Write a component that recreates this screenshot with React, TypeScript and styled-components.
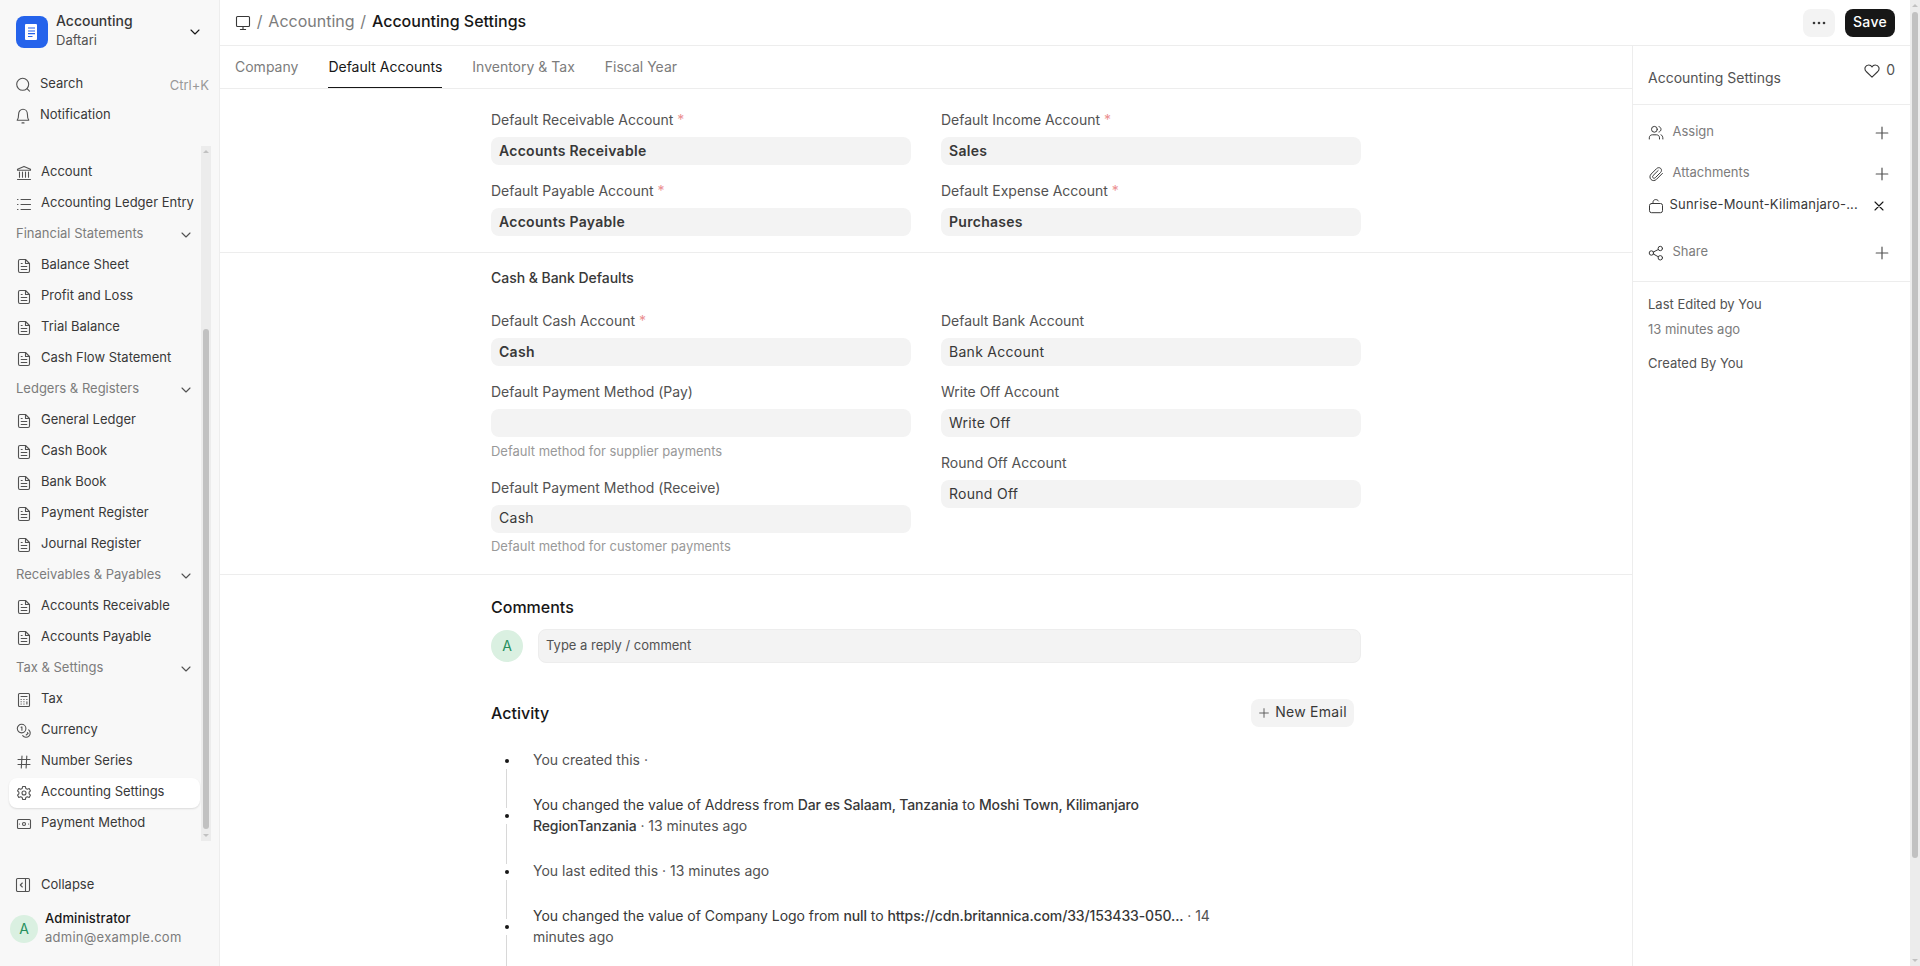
import React from 'react';
import styled, { createGlobalStyle, css } from 'styled-components';

const GlobalStyle = createGlobalStyle`
  * { box-sizing: border-box; }
  html, body { margin: 0; padding: 0; height: 966px; overflow: hidden; }
  body {
    font-family: Inter, "Liberation Sans", sans-serif;
    font-size: 14px;
    font-weight: 420;
    color: #383838;
    background: #fff;
  }
`;

const Shell = styled.div`
  display: flex;
  width: 1920px;
  height: 966px;
  overflow: hidden;
`;

/* ---------- icons ---------- */
const Svg = styled.svg<{ $size?: number; $color?: string }>`
  display: block;
  flex: none;
  width: ${(p) => p.$size ?? 16}px;
  height: ${(p) => p.$size ?? 16}px;
  fill: none;
  stroke: ${(p) => p.$color ?? '#525252'};
  stroke-linecap: round;
  stroke-linejoin: round;
`;

type IconName =
  | 'search' | 'bell' | 'bank' | 'list' | 'file' | 'calc' | 'coins' | 'hash' | 'gear' | 'cash'
  | 'collapse' | 'down' | 'desktop' | 'users' | 'clip' | 'unlock' | 'share' | 'plus' | 'x' | 'heart';

const shapes: Record<IconName, React.ReactNode> = {
  search: <><circle cx="6.7" cy="7.3" r="6" /><path d="M11 11.6L13.5 14.1" /></>,
  bell: <><path d="M1.2 12.2C2.4 10.9 2.6 9.8 2.6 6.3C2.6 3.4 4.6 1.3 7 1.3C9.4 1.3 11.4 3.4 11.4 6.3C11.4 9.8 11.6 10.9 12.8 12.2Z" /><path d="M6 14.9H8" /></>,
  bank: <><path d="M1.5 5.2V4.2L8 1.4L14.5 4.2V5.2Z" /><path d="M3.5 7V12.2M6.5 7V12.2M9.5 7V12.2M12.5 7V12.2M1.5 14.5H14.5" /></>,
  list: <path d="M5 3.5H14.5M5 8.5H14.5M5 13.5H14.5M1.5 3.5H2M1.5 8.5H2M1.5 13.5H2" />,
  file: <><path d="M4 1.5H9.5L13.5 5.5V13A1.5 1.5 0 0 1 12 14.5H4A1.5 1.5 0 0 1 2.5 13V3A1.5 1.5 0 0 1 4 1.5Z" /><path d="M9.5 1.5V5.5H13.5M5.2 5.5H6.2M5.2 8.5H10.8M5.2 11.5H10.8" /></>,
  calc: <><rect x="2.5" y="1.5" width="11" height="13" rx="1" /><path d="M5 4.5H11" /><path d="M5 7.5H5.3M7.8 7.5H8.1M10.7 7.5H11M5 9.8H5.3M7.8 9.8H8.1M10.9 9.8V12M5 12H5.3M7.8 12H8.1" /></>,
  coins: <><circle cx="5.6" cy="5.6" r="4.3" /><path d="M5 4.2L5.9 3.9V7.2M12.7 6.8A4.2 4.2 0 1 1 6.7 12.6M11.4 9.6L12.1 10.3L10.2 12" /></>,
  hash: <path d="M2 5.5H14M2 10.5H14M6 2L5.3 14M10.8 2L10.1 14" />,
  gear: <><circle cx="8" cy="8" r="2" /><path d="M6.7 1.5H9.3L9.8 3.4L11.3 4.2L13.2 3.6L14.5 5.9L13.1 7.2V8.8L14.5 10.1L13.2 12.4L11.3 11.8L9.8 12.6L9.3 14.5H6.7L6.2 12.6L4.7 11.8L2.8 12.4L1.5 10.1L2.9 8.8V7.2L1.5 5.9L2.8 3.6L4.7 4.2L6.2 3.4Z" /></>,
  cash: <><rect x="1.5" y="3.5" width="13" height="9" rx="1" /><circle cx="8" cy="8" r="1.5" /><path d="M3.4 8H3.5M12.5 8H12.6" /></>,
  collapse: <><rect x="1.5" y="1.5" width="13" height="13" rx="1.2" /><path d="M10.5 1.5V14.5M7.3 6L5.3 8L7.3 10" /></>,
  down: <path d="M4 6L8 10L12 6" />,
  desktop: <><rect x="1.5" y="1.5" width="13" height="10" rx="1" /><path d="M8 11.5V14.5M5.4 14.5H10.6" /></>,
  users: <><circle cx="6.4" cy="4.3" r="2.9" /><path d="M1.3 14V12.8C1.3 10.8 2.8 9.8 4.4 9.8H8.4C10 9.8 11.5 10.8 11.5 12.8V14M11 1.6C13.8 2.3 13.8 6.3 11 7M13 9.8C14.3 10.4 14.9 11.4 14.9 14" /></>,
  clip: <path d="M14.2 7.2L8.3 13.1C6.7 14.7 4.3 14.8 2.8 13.3C1.3 11.8 1.4 9.4 3 7.8L8.4 2.4C9.6 1.2 11.4 1.2 12.5 2.2C13.6 3.3 13.5 5.1 12.4 6.2L7.1 11.5C6.4 12.2 5.4 12.2 4.8 11.6C4.2 11 4.2 10 4.9 9.3L10 4.3" transform="translate(.2 .2)" />,
  unlock: <><rect x="1.5" y="5.5" width="13" height="9.2" rx="2" /><path d="M5 5.5V4.2C5 1.2 9.2.6 10.5 3" /></>,
  share: <><circle cx="3.4" cy="8" r="2.2" /><circle cx="12.3" cy="3.5" r="2.2" /><circle cx="12.3" cy="12.8" r="2.2" /><path d="M5.4 7L10.3 4.5M5.4 9L10.3 11.8" /></>,
  plus: <path d="M8 2.2V13.8M2.2 8H13.8" />,
  x: <path d="M4 4L12 12M12 4L4 12" />,
  heart: <path d="M8 14.2L2.2 8.5C-.3 5.8 1.3 2 4.7 2C6.4 2 7.5 3 8 4C8.5 3 9.6 2 11.3 2C14.7 2 16.3 5.8 13.8 8.5Z" />,
};

const Icon = ({ name, size, color, weight = 1.1 }: { name: IconName; size?: number; color?: string; weight?: number }) => (
  <Svg viewBox="0 0 16 16" $size={size} $color={color} strokeWidth={weight}>{shapes[name]}</Svg>
);

/* ---------- left sidebar ---------- */
const Sidebar = styled.aside`
  flex: none;
  display: flex;
  flex-direction: column;
  width: 220px;
  background: #f8f8f8;
  border-right: 1px solid #ededed;
`;

const Workspace = styled.div`
  display: flex;
  align-items: center;
  height: 64px;
  padding: 0 16px;
  gap: 8px;
`;

const Logo = styled.svg`
  display: block;
  width: 32px;
  height: 32px;
`;

const Names = styled.div<{ $spread?: boolean }>`
  flex: 1;
  padding-bottom: ${(p) => (p.$spread ? 3 : 2)}px;
  > :first-child { margin-bottom: ${(p) => (p.$spread ? 1 : 0)}px; }
`;

const Primary = styled.div`
  font-size: 14px;
  line-height: 19px;
  font-weight: 500;
`;

const UserName = styled(Primary)`
  font-size: 13px;
  letter-spacing: 0.01em;
  color: #171717;
`;

const Secondary = styled.div`
  font-size: 13px;
  line-height: 19px;
  color: #525252;
`;

const Email = styled(Secondary)`
  letter-spacing: 0.02em;
  color: #7c7c7c;
`;

const QuickLinks = styled.div`
  display: flex;
  flex-direction: column;
  height: 82px;
  padding: 6px 10px 0 16px;
`;

const QuickLink = styled.div`
  display: flex;
  align-items: center;
  height: 30px;
  margin-bottom: 1px;
  gap: 8px;
  font-size: 13px;
`;

const Label = styled.span<{ $low?: boolean }>`
  flex: 1;
  padding-bottom: ${(p) => (p.$low ? 2 : 4)}px;
  white-space: nowrap;
`;

const Shortcut = styled.span`
  color: #999;
`;

const NavArea = styled.div`
  display: flex;
  height: 695px;
`;

const NavList = styled.nav`
  width: 201px;
  padding: 12px 1px 0 9px;
`;

const NavItem = styled.div<{ $active?: boolean; $group?: boolean }>`
  display: flex;
  align-items: center;
  height: 30px;
  margin-bottom: 1px;
  padding: 0 6px 0 7px;
  gap: 9px;
  border-radius: 8px;
  font-size: 13px;
  ${(p) => p.$group && css`color: #7c7c7c;`}
  ${(p) => p.$active && css`background: #fff; box-shadow: 0 1px 2px rgba(0, 0, 0, 0.12);`}
`;

const Track = styled.div<{ $top: number }>`
  display: flex;
  flex-direction: column;
  align-items: center;
  width: 10px;
  height: 100%;
  background: #ececec;
  padding: 4px 0;

  &::before {
    content: '';
    border: 3px solid transparent;
    border-top: 0;
    border-bottom: 3px solid #c1c1c1;
    margin-bottom: ${(p) => p.$top}px;
  }
  &::after {
    content: '';
    border: 3px solid transparent;
    border-bottom: 0;
    border-top: 3px solid #c1c1c1;
    margin-top: auto;
  }
`;

const Thumb = styled.div<{ $height: number }>`
  flex: none;
  width: 6px;
  height: ${(p) => p.$height}px;
  border-radius: 3px;
  background: #c1c1c1;
`;

const NavTrack = styled.div`
  height: 695px;
`;

const SidebarFooter = styled.div`
  padding: 28px 10px 0 10px;
`;

const CollapseRow = styled.div`
  display: flex;
  align-items: center;
  height: 32px;
  padding-left: 5px;
  gap: 10px;
  font-size: 13px;
`;

const UserRow = styled.div`
  display: flex;
  align-items: center;
  gap: 7px;
  height: 54px;
  margin-top: 1px;
`;

const Avatar = styled.div<{ $size: number }>`
  display: flex;
  flex: none;
  align-items: center;
  justify-content: center;
  width: ${(p) => p.$size}px;
  height: ${(p) => p.$size}px;
  border-radius: 50%;
  background: #daf0e1;
  color: #278f5e;
  font-size: 14px;
  line-height: 1;
  padding-bottom: 1px;
`;

/* ---------- page ---------- */
const Page = styled.div`
  display: flex;
  flex-direction: column;
  width: 1690px;
`;

const Header = styled.header`
  display: flex;
  align-items: center;
  justify-content: space-between;
  height: 46px;
  padding: 1px 15px 0;
  border-bottom: 1px solid #ededed;
`;

const Crumbs = styled.div`
  display: flex;
  align-items: center;
  gap: 5.8px;
  font-size: 16px;
  line-height: 20px;
`;

const Crumb = styled.span<{ $current?: boolean }>`
  padding-bottom: 5px;
  font-weight: ${(p) => (p.$current ? 500 : 420)};
  color: ${(p) => (p.$current ? '#171717' : '#7c7c7c')};
`;

const Actions = styled.div`
  display: flex;
  gap: 10px;
`;

const Button = styled.button<{ $dark?: boolean; $width: number }>`
  display: flex;
  align-items: center;
  justify-content: center;
  gap: 5px;
  width: ${(p) => p.$width}px;
  height: 28px;
  padding: 0;
  border: 0;
  border-radius: 8px;
  background: ${(p) => (p.$dark ? '#171717' : '#f3f3f3')};
  color: ${(p) => (p.$dark ? '#fff' : '#383838')};
  font: inherit;
  font-weight: ${(p) => (p.$dark ? 500 : 420)};
  letter-spacing: 0.02em;
`;

const ButtonText = styled.span`
  padding-bottom: 3px;
`;

const Dots = styled.svg`
  width: 14px;
  height: 4px;
  fill: #383838;
`;

const Body = styled.div`
  display: flex;
  height: 920px;
`;

const Main = styled.main`
  width: 1412px;
  overflow: hidden;
`;

const Tabs = styled.div`
  display: flex;
  height: 43px;
  padding-left: 15px;
  gap: 30px;
  border-bottom: 1px solid #ededed;
`;

const Tab = styled.div<{ $active?: boolean }>`
  height: 42px;
  line-height: 42px;
  font-size: 14px;
  color: ${(p) => (p.$active ? '#171717' : '#7c7c7c')};
  border-bottom: ${(p) => (p.$active ? '1px solid #171717' : '0')};
`;

const Section = styled.section<{ $height: number; $top: number }>`
  height: ${(p) => p.$height}px;
  padding: ${(p) => p.$top}px 271px 0;
  border-bottom: 1px solid #ededed;
`;

const SectionTitle = styled.h3`
  margin: 0 0 23px;
  font-size: 14px;
  line-height: 20px;
  font-weight: 500;
  letter-spacing: -0.04px;
`;

const Columns = styled.div`
  display: grid;
  grid-template-columns: 420px 420px;
  column-gap: 30px;
`;

const Column = styled.div`
  display: flex;
  flex-direction: column;
`;

const FieldBox = styled.div<{ $hint?: boolean }>`
  height: ${(p) => (p.$hint ? 96 : 71)}px;
`;

const FieldLabel = styled.div`
  height: 27px;
  line-height: 20px;
  font-size: 14px;
  letter-spacing: -0.02px;
  color: #525252;
`;

const Star = styled.span`
  color: #eb9091;
`;

const Value = styled.div<{ $bold?: boolean; $raised?: boolean }>`
  height: 28px;
  padding: 0 8px;
  border-radius: 8px;
  background: #f3f3f3;
  line-height: ${(p) => (p.$raised ? 26 : 28)}px;
  font-size: 14px;
  letter-spacing: 0.02em;
  font-weight: ${(p) => (p.$bold ? 600 : 420)};
`;

const Hint = styled.div<{ $raised?: boolean }>`
  padding-top: ${(p) => (p.$raised ? 3 : 4)}px;
  font-size: 13px;
  line-height: 20px;
  letter-spacing: -0.02px;
  color: #999;
`;

type FieldProps = { label: string; value?: string; required?: boolean; hint?: string };

const Field = ({ label, value, required, hint }: FieldProps) => (
  <FieldBox $hint={!!hint}>
    <FieldLabel>{label}{required && <Star> *</Star>}</FieldLabel>
    <Value $bold={required} $raised={!!hint}>{value}</Value>
    {hint && <Hint $raised={!!value}>{hint}</Hint>}
  </FieldBox>
);

const Footer = styled.section`
  padding: 21px 271px 0;
`;

const FooterTitle = styled.h2`
  margin: 0;
  font-size: 16px;
  line-height: 22px;
  font-weight: 500;
  color: #171717;
`;

const CommentRow = styled.div`
  display: flex;
  align-items: center;
  gap: 15px;
  height: 34px;
  margin-top: 11px;
`;

const CommentBox = styled.div`
  flex: 1;
  height: 34px;
  padding: 0 7px;
  border: 1px solid #ededed;
  border-radius: 8px;
  background: #f3f3f3;
  font-size: 13px;
  line-height: 31px;
  color: #525252;
`;

const ActivityHead = styled.div`
  display: flex;
  align-items: center;
  justify-content: space-between;
  height: 28px;
  margin: 36px 7px 0 0;
`;

const Timeline = styled.div`
  display: flex;
  height: 217px;
  margin-top: 22px;
  overflow: hidden;
`;

const Event = styled.div<{ $tall?: boolean }>`
  height: ${(p) => (p.$tall ? 66 : 45)}px;
`;

const EventText = styled.div<{ $strong?: boolean }>`
  line-height: 21px;
  font-size: 14px;
  white-space: nowrap;
  letter-spacing: ${(p) => (p.$strong ? '-0.035px' : '0')};
  color: ${(p) => (p.$strong ? '#383838' : '#525252')};
  b { font-weight: 500; letter-spacing: -0.13px; color: #383838; }
`;

const Muted = styled.span`
  color: #525252;
`;

const Rail = styled.div`
  display: flex;
  flex-direction: column;
  flex: none;
  width: 42px;
  padding: 10px 0 0 14px;
`;

const Dot = styled.i`
  flex: none;
  width: 4px;
  height: 4px;
  border-radius: 50%;
  background: #171717;
`;

const Line = styled.i<{ $height: number }>`
  flex: none;
  width: 1px;
  height: ${(p) => p.$height}px;
  margin: 6px 0 6px 1px;
  background: #d8d8d8;
`;

/* ---------- right panel ---------- */
const Panel = styled.aside`
  width: 278px;
  border-left: 1px solid #ededed;
`;

const PanelHead = styled.div`
  display: flex;
  justify-content: space-between;
  height: 59px;
  padding: 15px 15px 0;
  border-bottom: 1px solid #ededed;
`;

const PanelTitle = styled.div`
  padding-top: 7px;
  line-height: 20px;
  font-size: 14px;
  color: #525252;
`;

const Likes = styled.div`
  display: flex;
  align-items: center;
  height: 20px;
  gap: 6px;
  color: #525252;
  span { padding-bottom: 4px; }
`;

const PanelGroup = styled.div`
  height: 177px;
  padding: 13px 20px 0 15px;
  border-bottom: 1px solid #ededed;
`;

const PanelRow = styled.div<{ $gap?: number }>`
  display: flex;
  align-items: center;
  height: 30px;
  margin-bottom: ${(p) => p.$gap ?? 0}px;
  gap: 8.5px;
  font-size: 13px;
  color: #7c7c7c;
`;

const FileRow = styled(PanelRow)`
  gap: 5.5px;
  margin-right: 3px;
  letter-spacing: 0.017em;
  color: #383838;
`;

const Meta = styled.div`
  padding: 12px 15px;
  font-size: 13px;
  line-height: 20px;
  color: #525252;
`;

const MetaTime = styled.div`
  margin: 5px 0 14px;
  color: #7c7c7c;
`;

const PageScroll = styled.div`
  width: 10px;
  height: 966px;
`;

type Nav = { text: string; icon?: IconName; active?: boolean };
const nav: Nav[] = [
  { text: 'Account', icon: 'bank' },
  { text: 'Accounting Ledger Entry', icon: 'list' },
  { text: 'Financial Statements' },
  { text: 'Balance Sheet', icon: 'file' },
  { text: 'Profit and Loss', icon: 'file' },
  { text: 'Trial Balance', icon: 'file' },
  { text: 'Cash Flow Statement', icon: 'file' },
  { text: 'Ledgers & Registers' },
  { text: 'General Ledger', icon: 'file' },
  { text: 'Cash Book', icon: 'file' },
  { text: 'Bank Book', icon: 'file' },
  { text: 'Payment Register', icon: 'file' },
  { text: 'Journal Register', icon: 'file' },
  { text: 'Receivables & Payables' },
  { text: 'Accounts Receivable', icon: 'file' },
  { text: 'Accounts Payable', icon: 'file' },
  { text: 'Tax & Settings' },
  { text: 'Tax', icon: 'calc' },
  { text: 'Currency', icon: 'coins' },
  { text: 'Number Series', icon: 'hash' },
  { text: 'Accounting Settings', icon: 'gear', active: true },
  { text: 'Payment Method', icon: 'cash' },
];

export default function App() {
  return (
    <Shell>
      <GlobalStyle />
      <Sidebar>
        <Workspace>
          <Logo viewBox="0 0 32 32">
            <rect width="32" height="32" rx="8" fill="#2563eb" />
            <rect x="9" y="8" width="12" height="16" rx="1" fill="#fff" />
            <path d="M12 12H19M12 15H19M12 17.7H19M12 20.5H16.5" stroke="#2563eb" strokeWidth="1.2" />
          </Logo>
          <Names $spread>
            <Primary>Accounting</Primary>
            <Secondary>Daftari</Secondary>
          </Names>
          <Icon name="down" color="#171717" weight={1.1} />
        </Workspace>
        <QuickLinks>
          <QuickLink><Icon name="search" /><Label>Search</Label><Shortcut>Ctrl+K</Shortcut></QuickLink>
          <QuickLink><Icon name="bell" /><Label>Notification</Label></QuickLink>
        </QuickLinks>
        <NavArea>
          <NavList>
            {nav.map((n) => (
              <NavItem key={n.text} $active={n.active} $group={!n.icon}>
                {n.icon && <Icon name={n.icon} />}
                <Label>{n.text}</Label>
                {!n.icon && <Icon name="down" />}
              </NavItem>
            ))}
          </NavList>
          <NavTrack><Track $top={176}><Thumb $height={500} /></Track></NavTrack>
        </NavArea>
        <SidebarFooter>
          <CollapseRow><Icon name="collapse" /><Label $low>Collapse</Label></CollapseRow>
          <UserRow>
            <Avatar $size={28}>A</Avatar>
            <Names>
              <UserName>Administrator</UserName>
              <Email>admin@example.com</Email>
            </Names>
          </UserRow>
        </SidebarFooter>
      </Sidebar>

      <Page>
        <Header>
          <Crumbs>
            <Icon name="desktop" color="#383838" />
            <Crumb>/</Crumb>
            <Crumb>Accounting</Crumb>
            <Crumb>/</Crumb>
            <Crumb $current>Accounting Settings</Crumb>
          </Crumbs>
          <Actions>
            <Button $width={32}>
              <Dots viewBox="0 0 14 4"><circle cx="2" cy="2" r="1.3" /><circle cx="7" cy="2" r="1.3" /><circle cx="12" cy="2" r="1.3" /></Dots>
            </Button>
            <Button $dark $width={50}><ButtonText>Save</ButtonText></Button>
          </Actions>
        </Header>
        <Body>
          <Main>
            <Tabs>
              <Tab>Company</Tab>
              <Tab $active>Default Accounts</Tab>
              <Tab>Inventory &amp; Tax</Tab>
              <Tab>Fiscal Year</Tab>
            </Tabs>
            <Section $height={164} $top={21}>
              <Columns>
                <Column>
                  <Field label="Default Receivable Account" value="Accounts Receivable" required />
                  <Field label="Default Payable Account" value="Accounts Payable" required />
                </Column>
                <Column>
                  <Field label="Default Income Account" value="Sales" required />
                  <Field label="Default Expense Account" value="Purchases" required />
                </Column>
              </Columns>
            </Section>
            <Section $height={322} $top={15}>
              <SectionTitle>Cash &amp; Bank Defaults</SectionTitle>
              <Columns>
                <Column>
                  <Field label="Default Cash Account" value="Cash" required />
                  <Field label="Default Payment Method (Pay)" hint="Default method for supplier payments" />
                  <Field label="Default Payment Method (Receive)" value="Cash" hint="Default method for customer payments" />
                </Column>
                <Column>
                  <Field label="Default Bank Account" value="Bank Account" />
                  <Field label="Write Off Account" value="Write Off" />
                  <Field label="Round Off Account" value="Round Off" />
                </Column>
              </Columns>
            </Section>
            <Footer>
              <FooterTitle>Comments</FooterTitle>
              <CommentRow>
                <Avatar $size={32}>A</Avatar>
                <CommentBox>Type a reply / comment</CommentBox>
              </CommentRow>
              <ActivityHead>
                <FooterTitle>Activity</FooterTitle>
                <Button $width={103}><Icon name="plus" size={12} weight={1.2} /><ButtonText>New Email</ButtonText></Button>
              </ActivityHead>
              <Timeline>
                <Rail>
                  <Dot /><Line $height={39} /><Dot /><Line $height={40} /><Dot /><Line $height={39} /><Dot /><Line $height={39} />
                </Rail>
                <div>
                  <Event><EventText>You created this ·</EventText></Event>
                  <Event $tall>
                    <EventText $strong>You changed the value of Address from <b>Dar es Salaam, Tanzania</b> to <b>Moshi Town, Kilimanjaro<br />RegionTanzania</b> <Muted>· 13 minutes ago</Muted></EventText>
                  </Event>
                  <Event><EventText>You last edited this · 13 minutes ago</EventText></Event>
                  <Event $tall>
                    <EventText $strong>You changed the value of Company Logo from <b>null</b> to <b>https://cdn.britannica.com/33/153433-050...</b> <Muted>· 14<br />minutes ago</Muted></EventText>
                  </Event>
                </div>
              </Timeline>
            </Footer>
          </Main>
          <Panel>
            <PanelHead>
              <PanelTitle>Accounting Settings</PanelTitle>
              <Likes><Icon name="heart" color="#383838" /><span>0</span></Likes>
            </PanelHead>
            <PanelGroup>
              <PanelRow $gap={11}><Icon name="users" color="#383838" weight={1} /><Label>Assign</Label><Icon name="plus" weight={1.2} /></PanelRow>
              <PanelRow $gap={2}><Icon name="clip" color="#383838" weight={1} /><Label>Attachments</Label><Icon name="plus" weight={1.2} /></PanelRow>
              <FileRow $gap={17}><Icon name="unlock" color="#383838" weight={1} /><Label>Sunrise-Mount-Kilimanjaro-...</Label><Icon name="x" color="#171717" /></FileRow>
              <PanelRow><Icon name="share" color="#383838" weight={1} /><Label>Share</Label><Icon name="plus" weight={1.2} /></PanelRow>
            </PanelGroup>
            <Meta>
              <div>Last Edited by You</div>
              <MetaTime>13 minutes ago</MetaTime>
              <div>Created By You</div>
            </Meta>
          </Panel>
        </Body>
      </Page>
      <PageScroll><Track $top={5}><Thumb $height={846} /></Track></PageScroll>
    </Shell>
  );
}
